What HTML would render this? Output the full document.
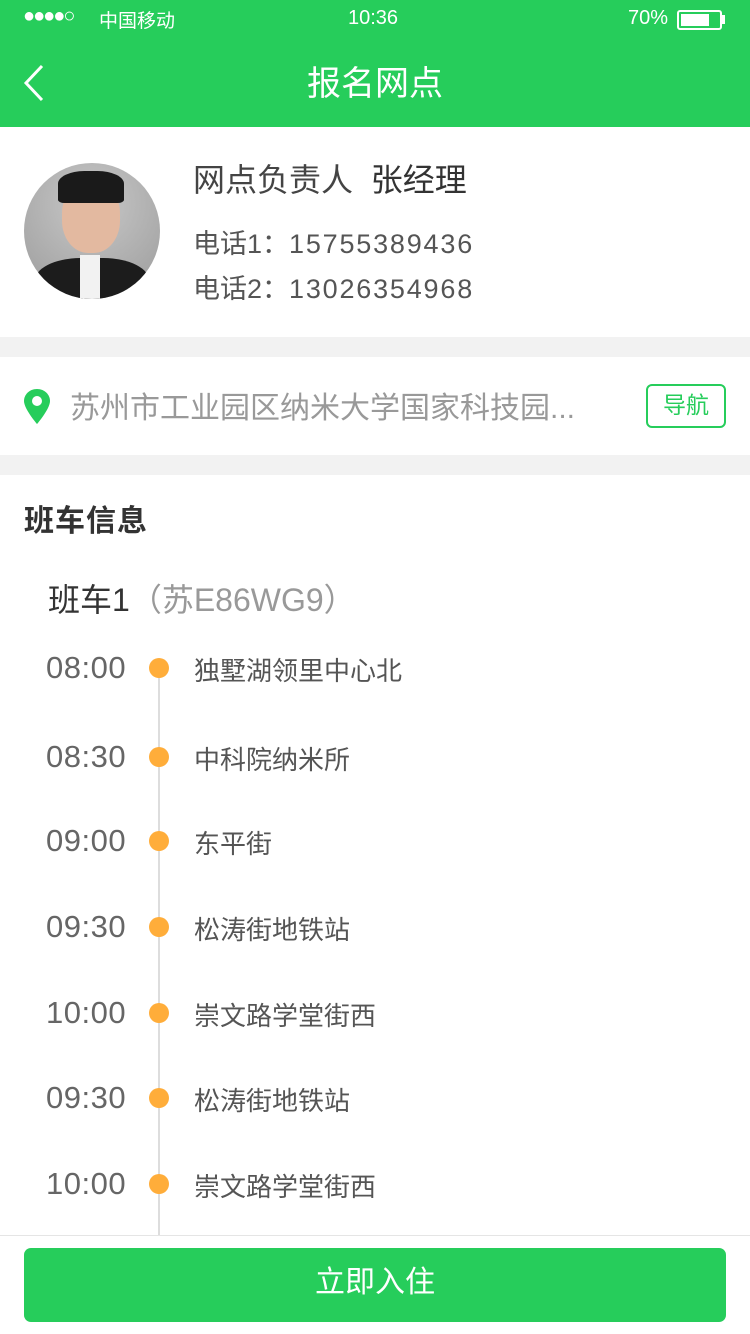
<!DOCTYPE html>
<html><head><meta charset="utf-8"><style>
*{margin:0;padding:0;box-sizing:border-box}
body{width:750px;height:1334px;overflow:hidden;background:#fff;font-family:"Liberation Sans","Noto Sans CJK SC",sans-serif;position:relative}
.abs{position:absolute;white-space:nowrap}
.hdr{position:absolute;left:0;top:0;width:750px;height:127px;background:#26cd5b;color:#fff}
.gap{position:absolute;left:0;width:750px;height:20px;background:#f2f2f2}
.t{position:absolute;left:46px;font-size:31px;color:#666;letter-spacing:0.5px}
.s{position:absolute;left:194px;font-size:26px;color:#555}
.d{position:absolute;left:149px;width:20px;height:20px;border-radius:50%;background:#ffad3a}
</style></head><body>
<div class="hdr">
 <div class="abs" style="left:23px;top:5px;font-size:20px;letter-spacing:-2px">●●●●○</div>
 <div class="abs" style="left:99px;top:6px;font-size:19px">中国移动</div>
 <div class="abs" style="left:348px;top:7px;font-size:20px">10:36</div>
 <div class="abs" style="left:628px;top:7px;font-size:20px">70%</div>
 <div class="abs" style="left:677px;top:10px;width:45px;height:20px;border:2px solid #fff;border-radius:3px"><div style="margin:2px;width:28px;height:12px;background:#fff"></div></div>
 <div class="abs" style="left:722px;top:15px;width:3px;height:9px;background:#fff"></div>
 <svg class="abs" style="left:22px;top:64px" width="26" height="38"><path d="M20 2 L4 19 L20 36" stroke="#fff" stroke-width="3" fill="none"/></svg>
 <div class="abs" style="left:0;width:750px;text-align:center;top:56px;font-size:34px">报名网点</div>
</div>
<div class="abs" style="left:24px;top:163px;width:136px;height:136px;border-radius:50%;background:radial-gradient(circle at 50% 30%,#c8c8c8,#9a9a9a);overflow:hidden">
 <div style="position:absolute;left:38px;top:18px;width:58px;height:72px;border-radius:45%;background:#e3b9a0"></div>
 <div style="position:absolute;left:34px;top:8px;width:66px;height:32px;border-radius:40% 40% 10% 10%;background:#1a1a1a"></div>
 <div style="position:absolute;left:10px;top:95px;width:116px;height:60px;border-radius:40% 40% 0 0;background:#1c1c1c"></div>
 <div style="position:absolute;left:56px;top:92px;width:20px;height:44px;background:#f2f2f2"></div>
</div>
<div class="abs" style="left:193px;top:155px;font-size:32px;color:#444">网点负责人&nbsp;&nbsp;<span style="color:#333">张经理</span></div>
<div class="abs" style="left:193px;top:222px;font-size:27px;color:#555">电话1：<span style="letter-spacing:1.8px">15755389436</span></div>
<div class="abs" style="left:193px;top:267px;font-size:27px;color:#555">电话2：<span style="letter-spacing:1.8px">13026354968</span></div>
<div class="gap" style="top:337px"></div>
<svg class="abs" style="left:22px;top:388px" width="32" height="38"><path d="M15 1 C7 1 2 7 2 13 C2 21 15 36 15 36 C15 36 28 21 28 13 C28 7 23 1 15 1Z" fill="#26cd5b"/><circle cx="15" cy="13" r="5" fill="#fff"/></svg>
<div class="abs" style="left:70px;top:383px;font-size:30px;color:#999">苏州市工业园区纳米大学国家科技园...</div>
<div class="abs" style="left:646px;top:384px;width:80px;height:44px;border:2px solid #26cd5b;border-radius:6px;color:#26cd5b;font-size:23px;text-align:center;line-height:38px">导航</div>
<div class="gap" style="top:455px"></div>
<div class="abs" style="left:24px;top:496px;font-size:30px;color:#333;font-weight:bold;letter-spacing:1px">班车信息</div>
<div class="abs" style="left:48px;top:575px;font-size:32px;color:#333">班车1<span style="color:#999">（苏E86WG9）</span></div>
<div class="abs" style="left:158px;top:670px;width:2px;height:570px;background:#ddd"></div>
<div class="t" style="top:650px">08:00</div><div class="d" style="top:658px"></div><div class="s" style="top:651px">独墅湖领里中心北</div>
<div class="t" style="top:739px">08:30</div><div class="d" style="top:747px"></div><div class="s" style="top:740px">中科院纳米所</div>
<div class="t" style="top:823px">09:00</div><div class="d" style="top:831px"></div><div class="s" style="top:824px">东平街</div>
<div class="t" style="top:909px">09:30</div><div class="d" style="top:917px"></div><div class="s" style="top:910px">松涛街地铁站</div>
<div class="t" style="top:995px">10:00</div><div class="d" style="top:1003px"></div><div class="s" style="top:996px">崇文路学堂街西</div>
<div class="t" style="top:1080px">09:30</div><div class="d" style="top:1088px"></div><div class="s" style="top:1081px">松涛街地铁站</div>
<div class="t" style="top:1166px">10:00</div><div class="d" style="top:1174px"></div><div class="s" style="top:1167px">崇文路学堂街西</div>
<div class="abs" style="left:0;top:1235px;width:750px;height:99px;background:#fff;border-top:1px solid #e5e5e5"></div>
<div class="abs" style="left:24px;top:1248px;width:702px;height:74px;background:#26cd5b;border-radius:7px;color:#fff;font-size:30px;text-align:center;line-height:70px">立即入住</div>
</body></html>
